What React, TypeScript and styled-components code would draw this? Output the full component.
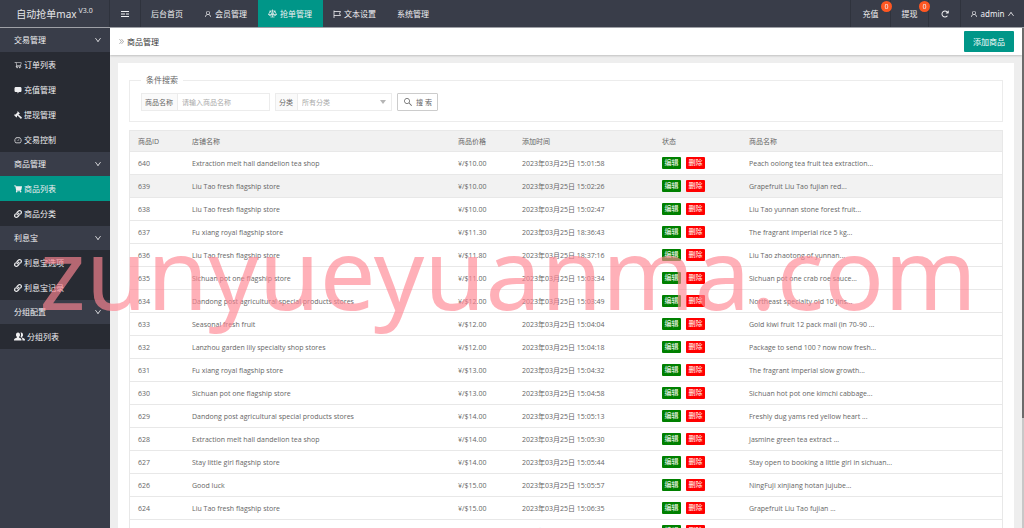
import React from 'react';
import styled, { createGlobalStyle } from 'styled-components';
import {
  AiOutlineDashboard,
  AiOutlineDoubleRight,
  AiOutlineDown,
  AiOutlineSearch,
  AiOutlineShoppingCart,
  AiOutlineUp,
  AiOutlineUser,
} from 'react-icons/ai';
import { FaLink, FaShoppingCart } from 'react-icons/fa';
import { FaArrowRotateRight } from 'react-icons/fa6';

const uiFont = '"Noto Sans", "Noto Sans CJK SC", sans-serif';
const dataFont = '"Open Sans", "Noto Sans CJK SC", sans-serif';

const GlobalStyle = createGlobalStyle`
  *, *::before, *::after { box-sizing: border-box; }
  body { margin: 0; background: #eee; color: #333; font: 8px/1 ${uiFont}; }
  button, input, select { font: inherit; color: inherit; margin: 0; }
  a { color: inherit; text-decoration: none; }
  ul { list-style: none; margin: 0; padding: 0; }
  svg { flex: none; display: block; }
`;

const Shell = styled.div`
  display: grid;
  grid-template: 28px minmax(0, 1fr) / 110px minmax(0, 1fr);
  height: 100vh;
  overflow: hidden;
`;

const TopBar = styled.header`
  grid-column: 1 / -1;
  display: flex;
  background: #393d49;
  color: #f0f0f2;
  border-bottom: 1px solid #9fa1a7;
`;

const Logo = styled.a`
  width: 110px;
  display: flex;
  align-items: center;
  justify-content: center;
  gap: 2px;
  font-size: 10px;
  border-right: 1px solid #2f333d;
  color: #e4e5e8;
`;

const Version = styled.sup`
  font-size: 7px;
  line-height: 1;
  padding-bottom: 6px;
`;

const ToggleButton = styled.button`
  width: 31px;
  border: 0;
  border-right: 1px solid #2f333d;
  background: none;
  padding: 0;
  display: grid;
  place-items: center;
`;

const TopNav = styled.nav`
  display: flex;
  flex: 1;
`;

const NavLink = styled.a<{ $active?: boolean }>`
  display: flex;
  align-items: center;
  gap: 3px;
  padding: 0 11px 0 10px;
  background: ${(p) => (p.$active ? '#009688' : 'transparent')};
`;

const UserCell = styled.a<{ $width: number }>`
  position: relative;
  width: ${(p) => p.$width}px;
  display: flex;
  align-items: center;
  justify-content: center;
  gap: 3px;
  border-left: 1px solid #2f333d;
`;

const Badge = styled.span`
  position: absolute;
  top: 1px;
  right: -2px;
  z-index: 1;
  width: 11px;
  height: 11px;
  border-radius: 50%;
  background: #ff5722;
  font-size: 7px;
  line-height: 11px;
  text-align: center;
`;

const Sidebar = styled.nav`
  background: #393d49;
  color: #f0f0f2;
`;

const GroupButton = styled.button`
  display: flex;
  align-items: center;
  justify-content: space-between;
  width: 100%;
  height: 24px;
  border: 0;
  background: none;
  padding: 0 8px 0 14px;
`;

const SubList = styled.ul`
  background: #282b33;
`;

const SubLink = styled.a<{ $active?: boolean }>`
  display: flex;
  align-items: center;
  gap: 2px;
  height: 25px;
  padding-left: 14px;
  background: ${(p) => (p.$active ? '#009688' : 'transparent')};
`;

const Main = styled.main`
  display: flex;
  min-width: 0;
  min-height: 0;
`;

const Page = styled.div`
  flex: 1;
  min-width: 0;
  overflow: hidden;
`;

const ScrollTrack = styled.div`
  width: 2px;
  background: #c8c8c8;
`;

const ScrollThumb = styled.div`
  height: 78%;
  background: #6b6b6b;
`;

const CrumbBar = styled.div`
  display: flex;
  align-items: center;
  justify-content: space-between;
  height: 27px;
  padding: 0 8px;
  background: #fff;
  box-shadow: 0 1px 2px rgba(0, 0, 0, 0.2);
`;

const Crumb = styled.h1`
  display: flex;
  align-items: center;
  gap: 2px;
  margin: 0;
  font-size: 8px;
  font-weight: 400;
  svg { color: #999; }
`;

const AddButton = styled.button`
  height: 21px;
  padding: 0 9px;
  border: 0;
  border-radius: 1px;
  background: #009688;
  color: #fff;
`;

const Card = styled.section`
  margin: 8px 8px 0;
  padding: 11px;
  background: #fff;
  color: #666;
  font-family: ${dataFont};
  font-size: 7px;
`;

const SearchSet = styled.fieldset`
  margin: 0 0 8px;
  padding: 7px 11px 10px;
  border: 1px solid #ececec;
`;

const Legend = styled.legend`
  padding: 0 5px;
  font-size: 8px;
  line-height: 12px;
`;

const SearchRow = styled.form`
  display: flex;
  gap: 5px;
`;

const Field = styled.div<{ $width: number }>`
  display: flex;
  width: ${(p) => p.$width}px;
  height: 18px;
  border: 1px solid #ececec;
`;

const FieldLabel = styled.label`
  display: flex;
  align-items: center;
  padding: 0 4px 0 3px;
  background: #fafafa;
  border-right: 1px solid #ececec;
  white-space: nowrap;
`;

const TextInput = styled.input`
  flex: 1;
  min-width: 0;
  border: 0;
  padding: 0 4px;
  outline: 0;
  &::placeholder { color: #aaa; opacity: 1; }
`;

const SelectWrap = styled.div`
  display: flex;
  flex: 1;
  align-items: center;
  padding-right: 5px;
`;

const Select = styled.select`
  flex: 1;
  min-width: 0;
  appearance: none;
  border: 0;
  padding: 0 4px;
  background: none;
  color: #aaa;
  outline: 0;
`;

const SearchButton = styled.button`
  display: flex;
  align-items: center;
  justify-content: center;
  gap: 3px;
  width: 41px;
  height: 18px;
  padding: 0;
  border: 1px solid #ccc;
  border-radius: 1px;
  background: #fff;
  white-space: nowrap;
`;

const Table = styled.table`
  width: 100%;
  table-layout: fixed;
  border-spacing: 0;
  border: 1px solid #e8e8e8;
  border-bottom: 0;
`;

const HeadCell = styled.th<{ $width?: number }>`
  width: ${(p) => (p.$width ? `${p.$width}px` : 'auto')};
  height: 21px;
  padding: 0 8px;
  background: #f1f1f1;
  border-bottom: 1px solid #e8e8e8;
  font-weight: 400;
  text-align: left;
`;

const Row = styled.tr<{ $hover?: boolean }>`
  background: ${(p) => (p.$hover ? '#f2f2f2' : '#fff')};
`;

const Cell = styled.td`
  height: 23px;
  padding: 0 8px;
  border-bottom: 1px solid #e8e8e8;
  white-space: nowrap;
`;

const Actions = styled.div`
  display: flex;
  gap: 5px;
`;

const ActionButton = styled.button<{ $tone: string }>`
  width: 19px;
  height: 12px;
  padding: 0;
  border: 0;
  border-radius: 1px;
  background: ${(p) => p.$tone};
  color: #fff;
  line-height: 12px;
`;

const Watermark = styled.div`
  position: fixed;
  inset: 0;
  display: flex;
  align-items: center;
  justify-content: center;
  padding: 14px 8px 0 0;
  pointer-events: none;
  color: rgba(255, 135, 147, 0.66);
  font-size: 99px;
  line-height: 1;
`;

const MenuIcon = () => (
  <svg width="8" height="8" viewBox="0 0 8 8" fill="none" stroke="currentColor">
    <path d="M0 1.500h8M0 6.500h8" />
    <path d="M0 4h4M5 4h3" strokeWidth="1" />
  </svg>
);

const ScaleIcon = () => (
  <svg width="9" height="9" viewBox="0 0 18 18" fill="none" stroke="currentColor" strokeWidth="1.4">
    <path d="M9 1v15M3 4h12M5 16h8M4.500 4L1 11h7zM13.500 4L10 11h7zM1 11c1 3 6 3 7 0M10 11c1 3 6 3 7 0" />
  </svg>
);

const FlagIcon = () => (
  <svg width="8" height="8" viewBox="0 0 16 16" fill="none" stroke="currentColor" strokeWidth="1.6">
    <path d="M2 1v15M2 3h13l-2 4 2 4H2" />
  </svg>
);

const BubbleIcon = () => (
  <svg width="8" height="8" viewBox="0 0 16 16" fill="currentColor">
    <path d="M4 2h8c2 0 3 1 3 3v4c0 2-1 3-3 3h-2l-3 3v-3H4c-2 0-3-1-3-3V5c0-2 1-3 3-3z" />
  </svg>
);

const GavelIcon = () => (
  <svg width="8" height="8" viewBox="0 0 16 16" fill="currentColor">
    <path d="M7 0l5 5-2 1-1 1 7 6-2 3-7-7-1 1v2l-1 1-5-5 1-1h2l4-4V1z" />
  </svg>
);

const PeopleIcon = () => (
  <svg width="11" height="9" viewBox="0 0 22 18" fill="currentColor">
    <path d="M8 1c3 0 4 2 4 5 0 2-1 3-2 4v1c3 1 5 2 5 5v1H0v-1c0-3 3-4 6-5v-1C5 9 4 8 4 6c0-3 1-5 4-5z" />
    <path d="M14 1c3 0 4 2 4 5 0 2-1 3-2 4v1c3 1 6 2 6 5v1h-5c0-4-1-6-4-7 1-2 2-6 0-9z" />
  </svg>
);

const CaretIcon = () => (
  <svg width="6" height="4" viewBox="0 0 6 4" fill="#b5b5b5">
    <path d="M0 0h6L3 4z" />
  </svg>
);

type Item = { label: string; icon: React.ReactNode; active?: boolean };

const groups: { title: string; items: Item[] }[] = [
  {
    title: '交易管理',
    items: [
      { label: '订单列表', icon: <AiOutlineShoppingCart size={8} /> },
      { label: '充值管理', icon: <BubbleIcon /> },
      { label: '提现管理', icon: <GavelIcon /> },
      { label: '交易控制', icon: <AiOutlineDashboard size={8} /> },
    ],
  },
  {
    title: '商品管理',
    items: [
      { label: '商品列表', icon: <FaShoppingCart size={8} />, active: true },
      { label: '商品分类', icon: <FaLink size={8} /> },
    ],
  },
  {
    title: '利息宝',
    items: [
      { label: '利息宝选项', icon: <FaLink size={8} /> },
      { label: '利息宝记录', icon: <FaLink size={8} /> },
    ],
  },
  { title: '分组配置', items: [{ label: '分组列表', icon: <PeopleIcon /> }] },
];

const products: [number, string, string, string, string][] = [
  [640, 'Extraction melt hall dandelion tea shop', '10.00', '15:01:58', 'Peach oolong tea fruit tea extraction...'],
  [639, 'Liu Tao fresh flagship store', '10.00', '15:02:26', 'Grapefruit Liu Tao fujian red...'],
  [638, 'Liu Tao fresh flagship store', '10.00', '15:02:47', 'Liu Tao yunnan stone forest fruit...'],
  [637, 'Fu xiang royal flagship store', '11.30', '18:36:43', 'The fragrant imperial rice 5 kg...'],
  [636, 'Liu Tao fresh flagship store', '11.80', '18:37:16', 'Liu Tao zhaotong of yunnan...'],
  [635, 'Sichuan pot one flagship store', '11.00', '15:03:34', 'Sichuan pot one crab roe sauce...'],
  [634, 'Dandong post agricultural special products stores', '12.00', '15:03:49', 'Northeast specialty old 10 jins...'],
  [633, 'Seasonal fresh fruit', '12.00', '15:04:04', 'Gold kiwi fruit 12 pack mail (in 70-90 ...'],
  [632, 'Lanzhou garden lily specialty shop stores', '12.00', '15:04:18', 'Package to send 100 ? now now fresh...'],
  [631, 'Fu xiang royal flagship store', '13.00', '15:04:32', 'The fragrant imperial slow growth...'],
  [630, 'Sichuan pot one flagship store', '13.00', '15:04:58', 'Sichuan hot pot one kimchi cabbage...'],
  [629, 'Dandong post agricultural special products stores', '14.00', '15:05:13', 'Freshly dug yams red yellow heart ...'],
  [628, 'Extraction melt hall dandelion tea shop', '14.00', '15:05:30', 'Jasmine green tea extract ...'],
  [627, 'Stay little girl flagship store', '14.00', '15:05:44', 'Stay open to booking a little girl in sichuan...'],
  [626, 'Good luck', '15.00', '15:05:57', 'NingFuJi xinjiang hotan jujube...'],
  [624, 'Liu Tao fresh flagship store', '15.00', '15:06:35', 'Grapefruit Liu Tao fujian ...'],
  [623, 'Good luck', '15.00', '15:06:52', 'Liu Tao yunnan stone forest fruit...'],
];

export default function App() {
  return (
    <>
      <GlobalStyle />
      <Shell>
        <TopBar>
          <Logo href="#">
            自动抢单max <Version>V3.0</Version>
          </Logo>
          <ToggleButton aria-label="折叠菜单">
            <MenuIcon />
          </ToggleButton>
          <TopNav>
            <NavLink href="#">后台首页</NavLink>
            <NavLink href="#"><AiOutlineUser size={8} />会员管理</NavLink>
            <NavLink href="#" $active><ScaleIcon />抢单管理</NavLink>
            <NavLink href="#"><FlagIcon />文本设置</NavLink>
            <NavLink href="#">系统管理</NavLink>
          </TopNav>
          <UserCell href="#" $width={40}>充值<Badge>0</Badge></UserCell>
          <UserCell href="#" $width={38}>提现<Badge>0</Badge></UserCell>
          <UserCell href="#" $width={32} aria-label="刷新"><FaArrowRotateRight size={8} /></UserCell>
          <UserCell href="#" $width={64}><AiOutlineUser size={8} />admin<AiOutlineUp size={8} /></UserCell>
        </TopBar>
        <Sidebar>
          {groups.map((group) => (
            <div key={group.title}>
              <GroupButton>{group.title}<AiOutlineDown size={8} /></GroupButton>
              <SubList>
                {group.items.map((item) => (
                  <li key={item.label}>
                    <SubLink href="#" $active={item.active}>{item.icon}{item.label}</SubLink>
                  </li>
                ))}
              </SubList>
            </div>
          ))}
        </Sidebar>
        <Main>
          <Page>
            <CrumbBar>
              <Crumb><AiOutlineDoubleRight size={7} />商品管理</Crumb>
              <AddButton>添加商品</AddButton>
            </CrumbBar>
            <Card>
              <SearchSet>
                <Legend>条件搜索</Legend>
                <SearchRow>
                  <Field $width={129}>
                    <FieldLabel htmlFor="name">商品名称</FieldLabel>
                    <TextInput id="name" placeholder="请输入商品名称" />
                  </Field>
                  <Field $width={117}>
                    <FieldLabel htmlFor="category">分类</FieldLabel>
                    <SelectWrap>
                      <Select id="category"><option>所有分类</option></Select>
                      <CaretIcon />
                    </SelectWrap>
                  </Field>
                  <SearchButton type="button"><AiOutlineSearch size={10} />搜 索</SearchButton>
                </SearchRow>
              </SearchSet>
              <Table>
                <thead>
                  <tr>
                    <HeadCell $width={54}>商品ID</HeadCell>
                    <HeadCell $width={266}>店铺名称</HeadCell>
                    <HeadCell $width={64}>商品价格</HeadCell>
                    <HeadCell $width={140}>添加时间</HeadCell>
                    <HeadCell $width={87}>状态</HeadCell>
                    <HeadCell>商品名称</HeadCell>
                  </tr>
                </thead>
                <tbody>
                  {products.map(([id, shop, price, time, name]) => (
                    <Row key={id} $hover={id === 639}>
                      <Cell>{id}</Cell>
                      <Cell>{shop}</Cell>
                      <Cell>¥/${price}</Cell>
                      <Cell>2023年03月25日 {time}</Cell>
                      <Cell>
                        <Actions>
                          <ActionButton $tone="#008000">编辑</ActionButton>
                          <ActionButton $tone="#ff0000">删除</ActionButton>
                        </Actions>
                      </Cell>
                      <Cell>{name}</Cell>
                    </Row>
                  ))}
                </tbody>
              </Table>
            </Card>
          </Page>
          <ScrollTrack><ScrollThumb /></ScrollTrack>
        </Main>
      </Shell>
      <Watermark aria-hidden="true">zunyueyuanma.com</Watermark>
    </>
  );
}
